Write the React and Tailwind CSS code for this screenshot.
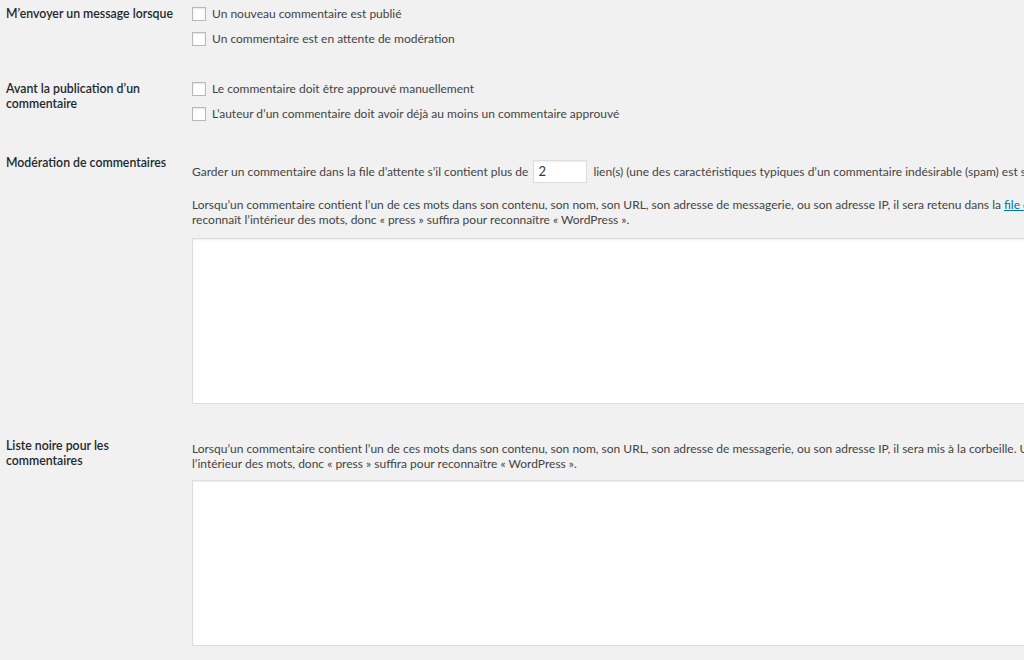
export default function App() {
  const Check = ({ children }) => (
    <div className="flex items-center h-[15px]">
      <span className="w-[14px] h-[14px] bg-white border border-[#b4b9be] shadow-[inset_0_1px_2px_rgba(0,0,0,0.1)] shrink-0" />
      <span className="ml-[6px] whitespace-nowrap">{children}</span>
    </div>
  );
  return (
    <div className="w-[1024px] h-[660px] overflow-hidden bg-[#f1f1f1] text-[12px] leading-[15px] text-[#444] font-['Lato','Liberation_Sans',sans-serif]">
      {/* Row 1 */}
      <div className="flex pt-[6px]">
        <div className="w-[192px] shrink-0 pl-[6px] pr-[10px] text-[12.3px] font-semibold text-[#23282d]">M’envoyer un message lorsque</div>
        <div className="flex flex-col gap-[10px]">
          <Check>Un nouveau commentaire est publié</Check>
          <Check>Un commentaire est en attente de modération</Check>
        </div>
      </div>
      {/* Row 2 */}
      <div className="flex pt-[35px]">
        <div className="w-[192px] shrink-0 pl-[6px] pr-[40px] text-[12.3px] font-semibold text-[#23282d]">Avant la publication d’un commentaire</div>
        <div className="flex flex-col gap-[10px]">
          <Check>Le commentaire doit être approuvé manuellement</Check>
          <Check>L’auteur d’un commentaire doit avoir déjà au moins un commentaire approuvé</Check>
        </div>
      </div>
      {/* Row 3 */}
      <div className="flex pt-[34px]">
        <div className="w-[192px] shrink-0 pl-[6px] pr-[10px] text-[12.3px] font-semibold text-[#23282d]">Modération de commentaires</div>
        <div className="flex flex-col min-w-0 flex-1">
          <div className="flex items-center mt-[5px] h-[23px] whitespace-nowrap">
            <span>Garder un commentaire dans la file d’attente s’il contient plus de</span>
            <span className="ml-[5px] mr-[6px] w-[54px] h-[23px] bg-white border border-[#ddd] shadow-[inset_0_1px_2px_rgba(0,0,0,0.07)] flex items-center pl-[4px] text-[13px] text-[#32373c] shrink-0">2</span>
            <span>lien(s) (une des caractéristiques typiques d’un commentaire indésirable (spam) est son nombre élevé de liens).</span>
          </div>
          <div className="mt-[14px] whitespace-nowrap">
            <div>Lorsqu’un commentaire contient l’un de ces mots dans son contenu, son nom, son URL, son adresse de messagerie, ou son adresse IP, il sera retenu dans la <span className="text-[#0073aa] underline">file d’attente de modération</span>. Un mot par ligne. Cela</div>
            <div>reconnaît l’intérieur des mots, donc « press » suffira pour reconnaître « WordPress ».</div>
          </div>
          <div className="mt-[11px] w-[1000px] h-[166px] bg-white border border-[#ddd] shadow-[inset_0_1px_2px_rgba(0,0,0,0.07)]" />
        </div>
      </div>
      {/* Row 4 */}
      <div className="flex pt-[34px]">
        <div className="w-[192px] shrink-0 pl-[6px] pr-[60px] text-[12.3px] font-semibold text-[#23282d]">Liste noire pour les commentaires</div>
        <div className="flex flex-col min-w-0 flex-1">
          <div className="mt-[3px] whitespace-nowrap">
            <div>Lorsqu’un commentaire contient l’un de ces mots dans son contenu, son nom, son URL, son adresse de messagerie, ou son adresse IP, il sera mis à la corbeille. Un mot par ligne. Cela reconnaît</div>
            <div>l’intérieur des mots, donc « press » suffira pour reconnaître « WordPress ».</div>
          </div>
          <div className="mt-[9px] w-[1000px] h-[166px] bg-white border border-[#ddd] shadow-[inset_0_1px_2px_rgba(0,0,0,0.07)]" />
        </div>
      </div>
    </div>
  );
}
